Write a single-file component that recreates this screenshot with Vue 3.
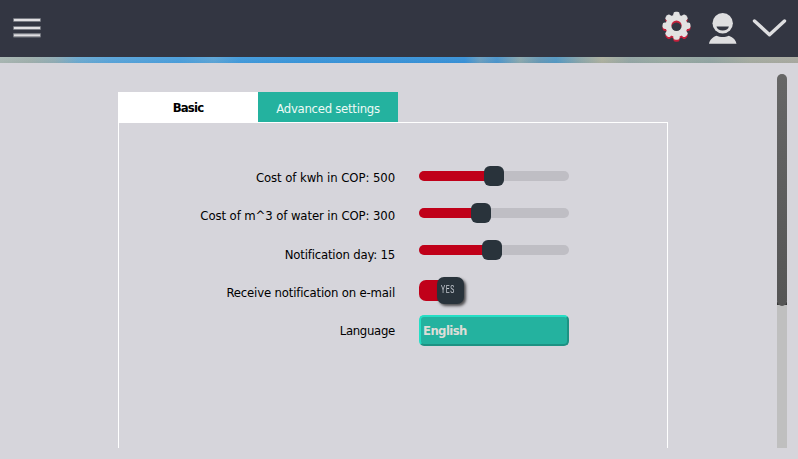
<script setup>
const labels = [
  { text: 'Cost of kwh in COP: 500' },
  { text: 'Cost of m^3 of water in COP: 300' },
  { text: 'Notification day: 15' },
  { text: 'Receive notification on e-mail' },
  { text: 'Language' },
]
const sliders = [65, 52, 63]
const teeth = [0, 45, 90, 135, 180, 225, 270, 315]
</script>

<template>
  <div class="app">
    <header class="bar">
      <svg class="menu" width="28" height="22" viewBox="0 0 28 22">
        <g fill="#777a82">
          <rect x="0" y="1" width="28" height="4" rx="1" />
          <rect x="0" y="9" width="28" height="4" rx="1" />
          <rect x="0" y="16" width="28" height="4.6" rx="1" />
        </g>
        <g fill="#e0dfe2">
          <rect x="1" y="2" width="26" height="2" />
          <rect x="1" y="10" width="26" height="2" />
          <rect x="1" y="17.3" width="26" height="2" />
        </g>
      </svg>
      <svg class="tools" width="138" height="57" viewBox="660 0 138 57">
        <defs>
          <mask id="hole">
            <rect x="655" y="0" width="50" height="57" fill="#fff" />
            <circle cx="676.5" cy="25.8" r="5.2" fill="#000" />
          </mask>
          <g id="gear" mask="url(#hole)">
            <circle cx="676.5" cy="25.800" r="11" />
            <rect
              v-for="a in teeth" :key="a" x="673.3" y="11.800" width="6.400" height="8" rx="2.400"
              :transform="`rotate(${a} 676.5 25.8)`"
            />
          </g>
        </defs>
        <use href="#gear" fill="#c6213c" y="2" />
        <use href="#gear" fill="#e2e2e2" />
        <circle cx="722.7" cy="23.2" r="10.200" fill="#dedee0" />
        <path d="M716.500 26.400h12.400c-.5 2.600-3 4.100-6.200 4.100s-5.700-1.500-6.200-4.100z" fill="#333642" />
        <path d="M709 43.700c.5-3.700 3.500-6.500 7.500-8 3.700 1.700 8.700 1.700 12.400 0 4.500 1.500 7 4.500 7.600 8z" fill="#dedee0" />
        <path d="M754.500 21l15 13.700 15-13.700" fill="none" stroke="#dedee0" stroke-width="3.400" stroke-linecap="round" stroke-linejoin="round" />
      </svg>
    </header>
    <div class="sky"></div>

    <main class="content">
      <section class="settings">
        <nav class="tabs">
          <div class="tab active"><span>Basic</span></div>
          <div class="tab"><span>Advanced settings</span></div>
        </nav>
        <div class="panel">
          <div class="labels">
            <div v-for="(l, i) in labels" :key="i" class="label" :class="`label-${i}`"><span>{{ l.text }}</span></div>
          </div>
          <div class="controls">
            <div v-for="(s, i) in sliders" :key="i" class="slider">
              <div class="track">
                <div class="fill" :style="{ width: s + 10 + 'px' }"></div>
              </div>
              <div class="handle" :style="{ left: s + 'px' }"></div>
            </div>
            <div class="switch">
              <div class="switch-bg"></div>
              <div class="knob"><span>YES</span></div>
            </div>
            <div class="select"><span>English</span></div>
          </div>
        </div>
      </section>
      <div class="scroll"><div class="thumb"></div></div>
    </main>
  </div>
</template>

<style>
html, body { margin: 0; overflow: hidden; }
</style>

<style scoped>
.app {
  width: 798px;
  height: 459px;
  background: #d6d5db;
  font-family: "DejaVu Sans Condensed", "DejaVu Sans", sans-serif;
  font-stretch: condensed;
  font-size: 13px;
  line-height: 16px;
  color: #000;
  white-space: nowrap;
  overflow: hidden;
}
.bar {
  box-sizing: border-box;
  height: 57px;
  background: #333642;
  display: flex;
  justify-content: space-between;
  padding-left: 13px;
}
.menu { margin-top: 17px; }
.sky {
  height: 6px;
  background:
    linear-gradient(rgba(255, 255, 255, .04), rgba(0, 0, 0, .02)),
    linear-gradient(90deg, #a9b7b3 0, #a0b0ad 30px, #91adb5 55px, #6caad0 78px, #5aa5da 110px, #4b9fdc 180px, #5ca5d7 214px, #429bdc 240px, #3b96da 300px, #3992d8 465px, #6b9fc0 480px, #4a95cd 497px, #8ca9ae 520px, #6699b7 540px, #5499c4 556px, #8ba6aa 580px, #aeb1a0 602px, #94a6a5 630px, #9aaba2 665px, #92a5a3 710px, #a6aca1 750px, #a9aaa1 798px);
}
.content {
  height: 396px;
  display: flex;
  justify-content: space-between;
  padding: 0 11px 0 118px;
  box-sizing: border-box;
}
.settings { width: 550px; padding-top: 29px; }
.tabs { display: flex; height: 30px; }
.tab {
  width: 140px;
  height: 30px;
  box-sizing: border-box;
  padding-top: 9px;
  text-align: center;
  letter-spacing: -.27px;
  background: #24b29f;
  color: #eefaf6;
}
.tab.active { padding-top: 8px; background: #fff; color: #000; font-weight: bold; letter-spacing: -.8px; }
.panel {
  box-sizing: border-box;
  height: 326px;
  border: 1px solid #fff;
  border-bottom: 0;
  display: flex;
  padding-top: 35px;
}
.labels { width: 276px; text-align: right; }
.label { height: 38.25px; line-height: 39px; }
.label-0 { letter-spacing: -.08px; }
.label-1 { letter-spacing: -.1px; }
.label-2 { letter-spacing: -.18px; }
.label-3 { letter-spacing: -.17px; }
.label-4 { letter-spacing: -.3px; }
.controls { width: 150px; margin-left: 24px; padding-top: 8px; }
.slider { position: relative; height: 20px; margin-bottom: 17px; display: flex; align-items: center; }
.track { width: 150px; height: 10px; border-radius: 5px; background: #bfbec4; overflow: hidden; }
.fill { height: 10px; background: #c00019; }
.handle { position: absolute; top: 0; width: 20px; height: 20px; border-radius: 6px; background: #29333b; }
.switch { position: relative; height: 27px; width: 46px; display: flex; align-items: center; }
.switch-bg { width: 40px; height: 21px; border-radius: 7px; background: #c00019; }
.knob {
  position: absolute;
  left: 18px;
  top: 0;
  width: 27px;
  height: 27px;
  box-sizing: border-box;
  padding-left: 4px;
  border-radius: 7px;
  background: #29333b;
  box-shadow: 2px 2px 3px rgba(0, 0, 0, .65);
  color: #c5c9d0;
  font: 10.5px/26px Roboto, sans-serif;
}
.knob span { display: inline-block; transform: scaleX(.65); transform-origin: 0 50%; letter-spacing: 1px; }
.select {
  box-sizing: border-box;
  height: 31px;
  margin-top: 11px;
  padding-left: 2px;
  border: 2px solid;
  border-color: #25dec5 #1d9283 #1d9283 #25dec5;
  border-radius: 5px;
  background: #24b29f;
  color: #deddd8;
  font-weight: bold;
  letter-spacing: -.6px;
  line-height: 27px;
}
.scroll { width: 10px; height: 374px; margin-top: 11px; background: linear-gradient(#bfbfbf 0 228px, #333 228px 231px, #bfbfbf 231px); border-radius: 5px 5px 0 0; }
.thumb { height: 232px; border-radius: 5px; background: linear-gradient(#666, #555); }
</style>
